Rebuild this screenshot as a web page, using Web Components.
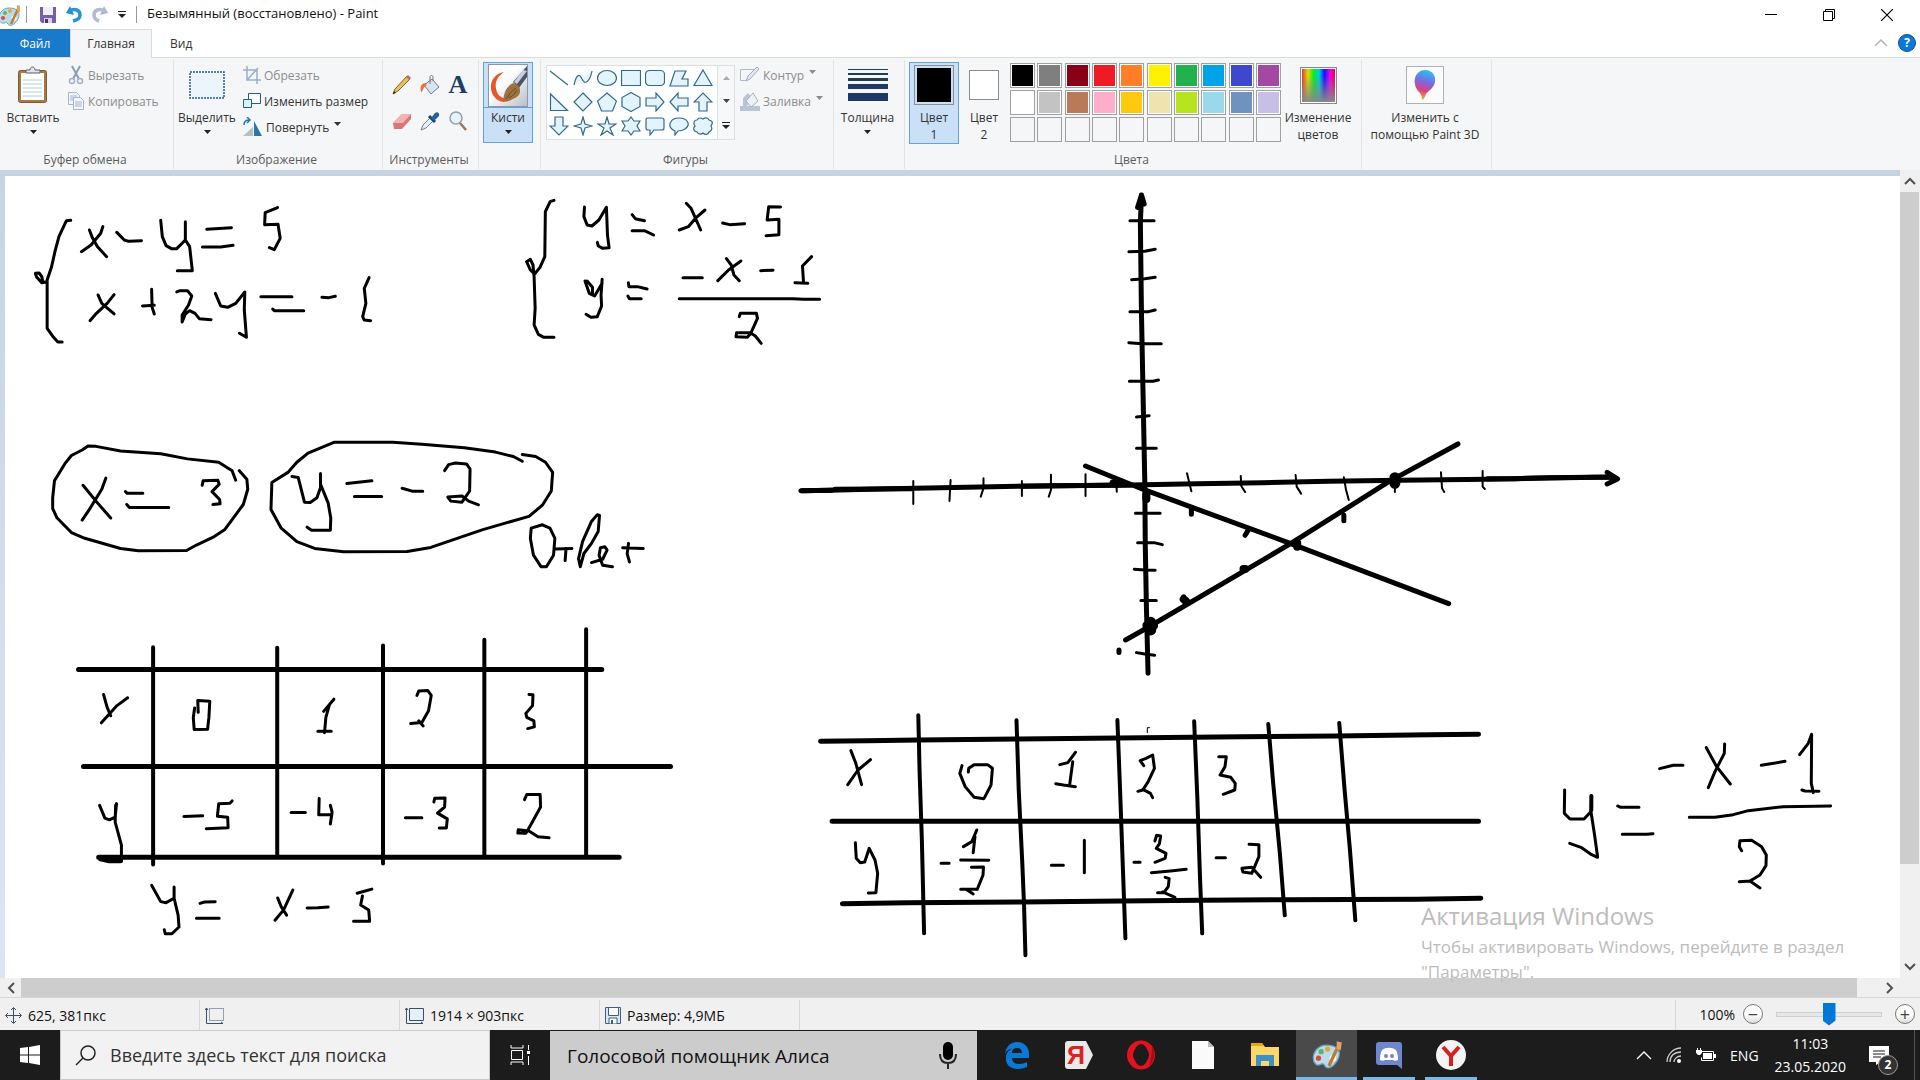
<!DOCTYPE html>
<html lang="ru">
<head>
<meta charset="utf-8">
<title>Безымянный (восстановлено) - Paint</title>
<style>
html, body {
    margin: 0;
    height: 100%;
}

body {
    font-family: "Open Sans", "Noto Sans", sans-serif;
    font-size: 12px;
    color: #333;
    background: #fff;
    overflow: hidden;
}
</style>
</head>
<body>
<paint-app></paint-app>

<script>
const base = `
*, *::before, *::after { box-sizing: border-box; }
button {
    font: inherit;
    color: inherit;
    background: none;
    border: 0;
    padding: 0;
    margin: 0;
}
svg { display: block; }
`

function define(name, css, html, setup) {
    customElements.define(name, class extends HTMLElement {
        constructor() {
            super();
            this.attachShadow({ mode: 'open' });
            const markup = typeof html == 'function' ? html(this) : html;
            this.shadowRoot.innerHTML = `<style>${base}${css}</style>${markup}`;
            if (setup) setup(this, this.shadowRoot);
        }
    })
}

// name: [width, height, svg body]
const palette = `
<path d="M11 4C5 4 1 9 1 14c0 4 3 6 5 5 2-1 3-1 4 1s4 2 7-1c4-4 5-9 3-12-2-2-5-3-9-3z" fill="#b9dcec" stroke="#6aa2bd"/>
<circle cx="5" cy="14" r="2" fill="#d94b3f"/><circle cx="7" cy="9" r="2" fill="#5bb562"/><circle cx="12" cy="7" r="2" fill="#e8a33b"/><circle cx="16" cy="14" r="2.500" fill="#fff"/>
<path d="M13 20 20 5" stroke="#c7772f" stroke-width="2.500"/><path d="m19 7 0-6 4 1-1 6z" fill="#e2a265"/>`
const icons = {
    paint: [22, 22, palette],
    paintBig: [30, 30, `<g transform="scale(1.300)">${palette}</g>`],
    save: [16, 16, `<path d="M0 0h16v16H2l-2-2z" fill="#7b5ea7"/><path d="M3 0h10v8H3z" fill="#eef0f8"/><path d="M4 11h8v5H4z" fill="#d9d3e6"/><path d="M5 12h3v4H5z" fill="#4c3676"/>`],
    undo: [16, 17, `<path d="M4 0 0 7l8 2z" fill="#1e8ed0"/><path d="M3 5c6-3 11-1 11 4 0 3-2 5-7 6" fill="none" stroke="#2794d3" stroke-width="3.500"/>`],
    redo: [16, 17, `<path d="m12 0 4 7-8 2z" fill="#a9b6cd"/><path d="M13 5C7 2 2 4 2 9c0 3 2 5 5 6" fill="none" stroke="#b0bcd0" stroke-width="3.500"/>`],
    more: [8, 7, `<path d="M0 .5h8" stroke="#222"/><path d="M0 3h8L4 7z" fill="#222"/>`],
    down: [7, 4, `<path d="M0 0h7L3.500 4z" fill="currentColor"/>`],
    up: [7, 4, `<path d="M0 4h7L3.500 0z" fill="currentColor"/>`],
    minimize: [12, 12, `<path d="M0 5.500h12" stroke="#000"/>`],
    restore: [12, 12, `<path d="M.5 2.500h9v9h-9zM2.500 2V.5h9v9H10" fill="none" stroke="#000"/>`],
    close: [12, 12, `<path d="m0 0 12 12M12 0 0 12" stroke="#000" stroke-width="1.200"/>`],
    fold: [14, 8, `<path d="m1 7 6-6 6 6" fill="none" stroke="#b5b5b5" stroke-width="1.500"/>`],
    paste: [32, 38, `<rect x="1.500" y="4.500" width="28" height="32" rx="2" fill="#a9793f" stroke="#7d5a31"/><path d="M4 7h23v27H4z" fill="#fff"/><path d="M6 14h19M6 18h19M6 22h19M6 26h19M6 30h19" stroke="#b6cde0"/><path d="M9 7V4h4c0-4 5-4 5 0h5v3z" fill="#e1e4e8" stroke="#59616b"/>`],
    cut: [18, 20, `<path d="m5 1 7 13M13 1 6 14" stroke="#8c9cb8" stroke-width="2"/><circle cx="5" cy="16" r="2.500" fill="none" stroke="#a2b1cc" stroke-width="1.500"/><circle cx="13" cy="16" r="2.500" fill="none" stroke="#a2b1cc" stroke-width="1.500"/>`],
    copy: [18, 20, `<path d="M1.500 1.500h8l3 3v9h-11z" fill="#f3f6fb" stroke="#a3b5cf"/><path d="M3 5h7M3 7h7M3 9h7" stroke="#a3b5cf"/><path d="M6.500 6.500h7l3 3v9h-10z" fill="#f3f6fb" stroke="#a3b5cf"/><path d="M8 11h7M8 13h7M8 15h7" stroke="#a3b5cf"/>`],
    select: [36, 28, `<rect x="1" y="1" width="34" height="26" fill="#edf5fc" stroke="#1f5c99" stroke-width="1.500" stroke-dasharray="2 1"/>`],
    crop: [18, 18, `<path d="M4 0v14h14M0 4h14v14M4 14 15 2" fill="none" stroke="#9dadc6" stroke-width="1.500"/>`],
    resize: [18, 16, `<path d="M5.500.5h12v10h-12z" fill="#fff" stroke="#1c5f91"/><path d="M.5 6.500h8v8h-8z" fill="#dff1fb" stroke="#1c5f91"/>`],
    rotate: [20, 20, `<path d="M0 19 10 10v9z" fill="#b9bfc6"/><path d="M11 4v15h8z" fill="#2979a8"/><path d="M1 8c0-3 2-5 5-5M4 0l3 3-3 3" fill="none" stroke="#2979a8" stroke-width="1.500"/>`],
    pencil: [20, 20, `<path d="m1 19 2-5L15 1l3 3L6 16z" fill="#e9c15d" stroke="#876126"/><path d="m14 2 2-2 3 3-2 2z" fill="#c66464"/><path d="m1 19 1-3 2 2z" fill="#333"/>`],
    bucket: [20, 20, `<path d="m4 10 8-6 7 8-8 7z" fill="#d8e5ef" stroke="#5f7f9a"/><path d="M10 9V2c0-2 3-2 3 0v4" fill="none" stroke="#777"/><path d="M7 8C1 8 0 11 1 17c2 0 2-5 5-6z" fill="#ec6f35"/>`],
    letter: [20, 20, `<text x="10" y="18" text-anchor="middle" font-family="Liberation Serif" font-weight="700" font-size="26" fill="#223c67">A</text>`],
    eraser: [20, 20, `<path d="m1 12 9-9 9 0 0 5-9 10H2z" fill="#d9767a"/><path d="m1 12 9-9h9l-8 9z" fill="#f4b3b1"/>`],
    picker: [20, 20, `<path d="m1 19 2-5 7-7 3 3-7 7z" fill="#e7f0f7" stroke="#738494"/><path d="m9 5 6 6" stroke="#174572" stroke-width="3"/><path d="m11 7 4-5c2-2 5 0 4 3l-5 5z" fill="#2463a0"/>`],
    zoom: [18, 20, `<circle cx="7" cy="7" r="6" fill="#e6f3fb" stroke="#8fa0ad" stroke-width="1.500"/><path d="m11 12 6 7" stroke="#a3714d" stroke-width="2.500"/>`],
    brush: [40, 43, `<defs><linearGradient id="b" x1="0" y1="0" x2="1" y2="1"><stop offset=".4" stop-color="#fff"/><stop offset="1" stop-color="#b9bdc6"/></linearGradient></defs><rect x=".5" y=".5" width="39" height="42" fill="url(#b)" stroke="#8c98a6"/><path d="M16 8C4 10 0 22 5 31c5 8 14 9 21 3-8 2-15 0-17-6-3-8-1-14 7-20z" fill="#e8562a"/><path d="M39 2 25 18l6 6 8-11z" fill="#4c5467"/><path d="m35 6-9 12 3 2 10-13z" fill="#c9ced8"/><path d="M15 38c1-6 1-12 7-17 3-3 7-2 9 2 2 3 1 7-1 9-4 4-9 3-15 6z" fill="#9b7340"/><path d="M18 35c3-4 5-8 10-11M21 34c4-2 6-5 8-8" stroke="#6d4a24" fill="none"/>`],
    thickness: [40, 32, `<path d="M0 .5h40" stroke="#1d3f57"/><path d="M0 5h40" stroke="#1d3f57" stroke-width="2"/><path d="M0 10.500h40" stroke="#1d3f57" stroke-width="3"/><path d="M0 17.500h40" stroke="#1e3963" stroke-width="5"/><path d="M0 28h40" stroke="#1e3963" stroke-width="8"/>`],
    outline: [20, 18, `<path d="M.5 3.500h14l-8 11h-6z" fill="none" stroke="#b3b8c2"/><path d="m6 15 2-5 9-9 2 2-9 10z" fill="#e5e8ee" stroke="#a1acbf"/>`],
    fill: [20, 20, `<path d="M0 15h20v5H0zM3 15V7l5-5 4 5-5 8z" fill="#b9c4d6"/><path d="m6 10 7-8 5 8-7 6z" fill="#eef1f6" stroke="#a4b1c6"/>`],
    colors: [37, 37, `<defs><linearGradient id="h"><stop offset="0" stop-color="#e33"/><stop offset=".18" stop-color="#dd0"/><stop offset=".36" stop-color="#0e2"/><stop offset=".52" stop-color="#0cd"/><stop offset=".68" stop-color="#11f"/><stop offset=".85" stop-color="#e0e"/><stop offset="1" stop-color="#e03"/></linearGradient><linearGradient id="v" x2="0" y2="1"><stop offset=".2" stop-color="#888" stop-opacity="0"/><stop offset="1" stop-color="#888"/></linearGradient></defs><rect x=".5" y=".5" width="36" height="36" fill="#fff" stroke="#888"/><path d="M2 2h33v33H2z" fill="url(#h)"/><path d="M2 2h33v33H2z" fill="url(#v)"/>`],
    paint3d: [38, 38, `<defs><linearGradient id="p" x1=".6" y1="0" x2=".4" y2="1"><stop offset="0" stop-color="#26c4ee"/><stop offset=".4" stop-color="#7d68e0"/><stop offset=".7" stop-color="#d8437d"/><stop offset="1" stop-color="#fbb42c"/></linearGradient></defs><rect x=".5" y=".5" width="37" height="37" fill="#fbfbfc" stroke="#b1b1b1"/><path d="M19 4c7 0 11 5 10 12-1 6-7 9-9 12-1 3-2 5-4 6 0-4-1-6-4-9C5 15 10 4 19 4z" fill="url(#p)"/>`],
    move: [17, 17, `<path d="M8.500 1v15M1 8.500h15M6 3l2.500-2.500L11 3M6 14l2.500 2.500L11 14M3 6 .5 8.500 3 11M14 6l2.500 2.500L14 11" fill="none" stroke="#384e66"/>`],
    selSize: [19, 17, `<path d="M4.500 1.500h14v12h-14z" fill="none" stroke="#39506a" stroke-dasharray="1 1"/><path d="M1.500 1v15.500H18M0 3l1.500-2L3 3M16 15l2 1.500" fill="none" stroke="#39506a"/>`],
    imgSize: [19, 17, `<path d="M4.500 1.500h14v12h-14z" fill="#e4f1fc" stroke="#39506a"/><path d="M1.500 1v15.500H18M0 3l1.500-2L3 3M16 15l2 1.500" fill="none" stroke="#39506a"/>`],
    disk: [16, 17, `<path d="M.5.5h15v16H.5z" fill="#d9e7f4" stroke="#3d5f84"/><path d="M3.500.5h10v8h-10z" fill="#fff" stroke="#3d5f84"/><path d="M4 11h8v6H4z" fill="#fff" stroke="#3d5f84"/><path d="M6 13h2v4H6z" fill="#3d5f84"/>`],
    windows: [20, 20, `<path d="m0 3 8-1v7.500H0zM9 2l11-2v9.500H9zM0 10.500h8V18l-8-1zM9 10.500h11V20L9 18z" fill="#fff"/>`],
    search: [21, 21, `<circle cx="13" cy="8" r="7" fill="none" stroke="#222" stroke-width="1.500"/><path d="m8 13-7 7" stroke="#222" stroke-width="1.500"/>`],
    taskview: [20, 20, `<path d="M1 0v3h12V0M1 20v-3h12v3M1.500 5.500h11v9h-11zM18.500 0v5M18.500 11v9" fill="none" stroke="#fff"/><path d="M17 6h3v3h-3z" fill="#fff"/>`],
    mic: [18, 28, `<rect x="4" width="10" height="18" rx="5" fill="#000"/><path d="M1 12c0 6 3 9 8 9s8-3 8-9M9 21v6" fill="none" stroke="#222" stroke-width="2"/>`],
    edge: [26, 27, `<path d="M1 12C2 4 7 0 13 0c8 0 12 6 12 12v4H8c0 4 3 6 7 6 3 0 6-1 8-2v5c-3 1-6 2-9 2-8 0-13-5-12-12 0-4 3-7 6-8-3 0-5 1-7 5zm7-1h10c0-3-2-5-5-5s-5 2-5 5z" fill="#0a78d6" fill-rule="evenodd"/>`],
    yandex: [28, 28, `<path d="M3 0h18l7 14-7 14H3q-3 0-3-3V3q0-3 3-3z" fill="#e9e9e9"/><text x="11" y="23" text-anchor="middle" font-family="Liberation Sans" font-weight="700" font-size="25" fill="#e02020">Я</text>`],
    opera: [30, 30, `<ellipse cx="15" cy="15" rx="11" ry="11.500" fill="none" stroke="#e2131f" stroke-width="6"/><ellipse cx="15" cy="15" rx="7" ry="11" fill="#1c1c1c"/><path d="M26 6c4 7 3 14-3 20 2-7 3-13 3-20z" fill="#a30d16"/>`],
    file: [22, 28, `<path d="M0 0h16l6 6v22H0z" fill="#fafafa"/><path d="M16 0v6h6z" fill="#bdbdbd"/>`],
    explorer: [28, 24, `<path d="M0 0h11l3 4h14v19H0z" fill="#fcd667"/><path d="M0 0h11l2 3H0z" fill="#e8a50d"/><path d="M5 23V12h18v11h-5v-5h-8v5z" fill="#3f8fc7"/>`],
    discord: [26, 27, `<path d="M3 0h20q3 0 3 3v24l-5-4H3q-3 0-3-3V3q0-3 3-3z" fill="#6f86d0"/><path d="M6 8c4-3 10-3 14 0 2 4 2 7 2 10-2 1-4 1-5 0H9c-1 1-3 1-5 0 0-3 0-6 2-10z" fill="#fff"/><circle cx="10" cy="14" r="2" fill="#6f86d0"/><circle cx="16" cy="14" r="2" fill="#6f86d0"/>`],
    ybrowser: [30, 30, `<circle cx="15" cy="15" r="15" fill="#f4f4f4"/><path d="m7 7 8 9v10M23 7l-8 9" fill="none" stroke="#d6201f" stroke-width="4"/>`],
    tray: [16, 9, `<path d="m1 8 7-7 7 7" fill="none" stroke="#fff" stroke-width="1.300"/>`],
    wifi: [16, 16, `<path d="M1 15C1 8 7 1 15 1M4 15c0-6 4-10 11-10M8 15c0-3 3-6 7-6" fill="none" stroke="#ccc" stroke-width="1.300"/><circle cx="13" cy="14" r="2" fill="#fff"/>`],
    battery: [20, 14, `<path d="M4.500 3.500h13v9h-12v-3" fill="none" stroke="#fff"/><path d="M7 5h9v6H7zM18 6h2v4h-2zM0 2h6v3L4 7H2L0 5zM1 0h1v2H1zM4 0h1v2H4z" fill="#fff"/>`],
    note: [20, 19, `<path d="M0 0h20v16h-8l-5 3v-3H0z" fill="#fff"/><path d="M4 5h12M4 8h12M4 11h8" stroke="#1c1c1c"/>`],
    arrowUp: [12, 8, `<path d="m1 7 5-5 5 5" fill="none" stroke="#505050" stroke-width="2"/>`],
    arrowDown: [12, 8, `<path d="m1 1 5 5 5-5" fill="none" stroke="#505050" stroke-width="2"/>`],
    arrowLeft: [8, 12, `<path d="M7 1 2 6l5 5" fill="none" stroke="#505050" stroke-width="2"/>`],
    arrowRight: [8, 12, `<path d="m1 1 5 5-5 5" fill="none" stroke="#505050" stroke-width="2"/>`]
}

define('ui-icon', `
:host { display: block; flex: none; }
`, el => {
    const [w, h, body] = icons[el.getAttribute('name')];
    return `<svg width="${w}" height="${h}" viewBox="0 0 ${w} ${h}" aria-hidden="true">${body}</svg>`
})

define('title-bar', `
:host { display: flex; align-items: center; height: 29px; padding-right: 4px; color: #111; background: #fff; }
.quick { display: flex; align-items: center; gap: 10px; margin-left: -2px; }
.line { width: 1px; height: 17px; background: #999; margin: 0 3px 0 0; }
.quick .line { margin: 0 3px 0 -4px; }
h1 { font-size: 13px; line-height: 17px; font-weight: 400; margin: 0 0 2px 7px; flex: 1; }
.win { display: flex; }
.win button { width: 58px; height: 28px; display: grid; place-items: center; }
`, `
<div class="quick">
    <ui-icon name="paint"></ui-icon>
    <span class="line"></span>
    <button aria-label="Сохранить"><ui-icon name="save"></ui-icon></button>
    <button aria-label="Отменить"><ui-icon name="undo"></ui-icon></button>
    <button aria-label="Вернуть"><ui-icon name="redo"></ui-icon></button>
    <button aria-label="Настройка"><ui-icon name="more"></ui-icon></button>
    <span></span>
</div>
<span class="line"></span>
<h1>Безымянный (восстановлено) - Paint</h1>
<div class="win">
    <button aria-label="Свернуть"><ui-icon name="minimize"></ui-icon></button>
    <button aria-label="Развернуть"><ui-icon name="restore"></ui-icon></button>
    <button aria-label="Закрыть"><ui-icon name="close"></ui-icon></button>
</div>
`)

define('tab-row', `
:host { display: flex; height: 29px; border-bottom: 1px solid #d9dcdd; background: #fff; }
button { height: 28px; padding: 0 18px; }
.file { width: 70px; background: #1979ca; color: #fff; padding: 0; }
.on { width: 82px; height: 29px; background: #f5f6f7; border: 1px solid #dadbdc; border-bottom: 0; padding: 0 0 1px; }
.space { flex: 1; }
.fold { padding: 0 10px; }
.help { width: 18px; height: 18px; border-radius: 50%; background: #0b78d7; border: 1px solid #0a5299; color: #fff; font-weight: 700; line-height: 16px; padding: 0; margin: 5px 4px 0 0; }
`, `
<button class="file">Файл</button>
<button class="on">Главная</button>
<button>Вид</button>
<span class="space"></span>
<button class="fold" aria-label="Свернуть ленту"><ui-icon name="fold"></ui-icon></button>
<button class="help">?</button>
`)

define('ribbon-group', `
:host { display: flex; flex-direction: column; flex: none; height: 109px; margin-top: 2px; padding-top: 2px; border-right: 1px solid #e2e3e4; }
.body { display: flex; flex: 1; align-items: flex-start; }
.label { height: 18px; line-height: 17px; text-align: center; color: #5c5c5c; padding-right: 3px; }
`, el => `<div class="body"><slot></slot></div><div class="label">${el.getAttribute('label') || ''}</div>`)

define('big-button', `
:host { display: block; width: 66px; }
button { width: 100%; min-height: 81px; display: flex; flex-direction: column; align-items: center; border: 1px solid transparent; line-height: 17px; text-align: center; white-space: nowrap; }
.icon { height: 44px; margin-bottom: 2px; display: grid; place-items: center; }
ui-icon { margin-top: 4px; color: #222; }
:host([active]) button { background: #c9e0f7; border-color: #62a2e4; }
:host([split]) .icon { height: 45px; margin-bottom: 1px; align-self: stretch; border-bottom: 1px solid #62a2e4; }
`, el => `
<button>
    <span class="icon"><slot name="icon"></slot></span>
    <span><slot></slot></span>
    ${el.hasAttribute('menu') ? '<ui-icon name="down"></ui-icon>' : ''}
</button>
`)

define('small-button', `
:host { display: block; }
button { height: 26px; display: flex; align-items: center; gap: 3px; padding-left: 3px; white-space: nowrap; }
button:disabled { color: #8d8d8d; }
.arrow { margin: -6px 0 0 2px; }
`, el => `
<button ${el.hasAttribute('off') ? 'disabled' : ''}>
    <ui-icon name="${el.getAttribute('icon')}"></ui-icon>
    <slot></slot>
    ${el.hasAttribute('menu') ? '<ui-icon class="arrow" name="down"></ui-icon>' : ''}
</button>
`)

define('tool-grid', `
:host { display: grid; grid-template-columns: repeat(3, 28px); grid-auto-rows: 36px; padding: 5px 0 0 5px; }
button { display: grid; place-items: center; }
`, ['pencil Карандаш', 'bucket Заливка', 'letter Текст', 'eraser Ластик', 'picker Палитра', 'zoom Масштаб'].map(t => {
    const [icon, label] = t.split(' ');
    return `<button aria-label="${label}"><ui-icon name="${icon}"></ui-icon></button>`
}).join(''))

const shapes = [
    '<path d="m1 3 18 14"/>',
    '<path d="M1 17C3 8 6 4 9 11s8 2 10-8"/>',
    '<ellipse cx="10" cy="10" rx="9.500" ry="7.500"/>',
    '<path d="M.5 2.500h19v15H.5z"/>',
    '<rect x=".5" y="2.500" width="19" height="15" rx="4"/>',
    '<path d="M6 3h11l-4 8h6v7H1z"/>',
    '<path d="m10 2 9 15.500H1z"/>',
    '<path d="M1.500 2v16.500h17z"/>',
    '<path d="m10 1 9 9-9 9-9-9z"/>',
    '<path d="m10 1 9.500 8-4 10h-11l-4-10z"/>',
    '<path d="m10 .5 9 5v9l-9 5-9-5v-9z"/>',
    '<path d="M1 6h10V1l8 9-8 9v-5H1z"/>',
    '<path d="M19 6H9V1l-8 9 8 9v-5h10z"/>',
    '<path d="M6 19V10H1l9-9 9 9h-5v9z"/>',
    '<path d="M6 1v9H1l9 9 9-9h-5V1z"/>',
    '<path d="m10 1 2 7 7 2-7 2-2 7-2-7-7-2 7-2z"/>',
    '<path d="m10 1 2 7h7l-6 4 3 7-6-4-6 4 3-7-6-4h7z"/>',
    '<path d="m10 1 3 4h6l-3 5 3 5h-6l-3 4-3-4H1l3-5-3-5h6z"/>',
    '<path d="M3 2h14q2 0 2 2v8q0 2-2 2H9l-4 5v-5H3q-2 0-2-2V4q0-2 2-2z"/>',
    '<path d="M6 19v-4C-3 11 1 2 10 2s12 7 6 11c-3 2-6 2-7 2z"/>',
    '<path d="M4 4c2-3 4-2 6-1 3-2 5-1 6 1 4 1 4 3 2 6 2 3 0 5-2 6-1 3-4 3-6 1-2 2-5 1-6-1-4-1-4-4-2-6C0 7 1 4 4 4z"/>'
]

define('shape-gallery', `
:host { display: flex; margin: 3px 0 0 5px; height: 75px; border: 1px solid #dcdfe3; background: #fdfefe; }
.list { display: grid; grid-template-columns: repeat(7, 24px); grid-auto-rows: 24px; width: 170px; }
.list button { display: grid; place-items: center; }
.list svg { fill: #e4f4fc; stroke: #35698c; stroke-width: 1.200; }
.bar { width: 17px; display: grid; border-left: 1px solid #dcdfe3; background: #f7f8fa; color: #444; }
.bar button { display: grid; place-items: center; }
.bar button:first-child { color: #aaa; }
`, `
<div class="list">${shapes.map((s, i) => `<button aria-label="Фигура ${i + 1}"><svg width="20" height="20" viewBox="0 0 20 20">${s}</svg></button>`).join('')}</div>
<div class="bar">
    <button aria-label="Вверх"><ui-icon name="up"></ui-icon></button>
    <button aria-label="Вниз"><ui-icon name="down"></ui-icon></button>
    <button aria-label="Все фигуры"><ui-icon name="more"></ui-icon></button>
</div>
`)

const swatches = `#000 #7f7f7f #880015 #ed1c24 #ff7f27 #fff200 #22b14c #00a2e8 #3f48cc #a349a4
#fff #c3c3c3 #b97a57 #ffaec9 #ffc90e #efe4b0 #b5e61d #99d9ea #7092be #c8bfe7`.split(/\s+/)

define('color-grid', `
:host { display: grid; grid-template-columns: repeat(10, 25px); grid-auto-rows: 25px; gap: 2px; justify-content: space-between; width: 271px; margin: 1px 0 0 1px; }
button { border: 1px solid #a0a0a0; padding: 1px; background: #fff; }
button:disabled { background: #f5f6f7; }
span { display: block; height: 100%; }
`, () => {
    let html = '';
    for (let i = 0; i < 30; i++) {
        const c = swatches[i];
        html += c ? `<button aria-label="${c}"><span style="background:${c}"></span></button>` : '<button disabled aria-label="Пусто"></button>';
    }
    return html
})

define('color-chip', `
:host { display: block; width: 30px; height: 30px; border: 1px solid #8c8c8c; background: #fff; }
:host([large]) { width: 40px; height: 40px; padding: 2px; background: #c9e0f7; }
i { display: block; height: 100%; }
`, el => `<i style="background:${el.getAttribute('color')}"></i>`)

define('ribbon-bar', `
:host { display: flex; height: 112px; background: #f5f6f7; }
.g1 { width: 174px; } .g2 { width: 209px; } .g3 { width: 96px; } .g4 { width: 62px; }
.g5 { width: 293px; } .g6 { width: 71px; } .g7 { width: 457px; } .g8 { width: 130px; }
.narrow { width: 50px; margin-left: 4px; }
.narrow + .narrow { margin-left: 0; }
.change { width: 74px; }
.thick { width: 67px; }
.p3d { width: 126px; }
.edit { margin-left: -2px; }
.shapes { margin-left: 2px; }
`, `
<ribbon-group class="g1" label="Буфер обмена">
    <big-button menu><ui-icon slot="icon" name="paste"></ui-icon>Вставить</big-button>
    <div class="edit">
        <small-button off icon="cut">Вырезать</small-button>
        <small-button off icon="copy">Копировать</small-button>
    </div>
</ribbon-group>
<ribbon-group class="g2" label="Изображение">
    <big-button menu><ui-icon slot="icon" name="select"></ui-icon>Выделить</big-button>
    <div>
        <small-button off icon="crop">Обрезать</small-button>
        <small-button icon="resize">Изменить размер</small-button>
        <small-button menu icon="rotate">Повернуть</small-button>
    </div>
</ribbon-group>
<ribbon-group class="g3" label="Инструменты"><tool-grid></tool-grid></ribbon-group>
<ribbon-group class="g4">
    <big-button class="narrow" active split menu><ui-icon slot="icon" name="brush"></ui-icon>Кисти</big-button>
</ribbon-group>
<ribbon-group class="g5" label="Фигуры">
    <shape-gallery></shape-gallery>
    <div class="shapes">
        <small-button off menu icon="outline">Контур</small-button>
        <small-button off menu icon="fill">Заливка</small-button>
    </div>
</ribbon-group>
<ribbon-group class="g6">
    <big-button class="thick" menu><ui-icon slot="icon" name="thickness"></ui-icon>Толщина</big-button>
</ribbon-group>
<ribbon-group class="g7" label="Цвета">
    <big-button class="narrow" active><color-chip slot="icon" large color="#000"></color-chip>Цвет<br>1</big-button>
    <big-button class="narrow"><color-chip slot="icon" color="#fff"></color-chip>Цвет<br>2</big-button>
    <color-grid></color-grid>
    <big-button class="change"><ui-icon slot="icon" name="colors"></ui-icon>Изменение<br>цветов</big-button>
</ribbon-group>
<ribbon-group class="g8">
    <big-button class="p3d"><ui-icon slot="icon" name="paint3d"></ui-icon>Изменить с<br>помощью Paint 3D</big-button>
</ribbon-group>
`)

// freehand strokes; each block has its own origin and scale
define('ink-sheet', `
:host { display: block; background: #fff; overflow: hidden; }
svg { fill: none; stroke: #000; stroke-width: 3px; stroke-linecap: round; stroke-linejoin: round; }
path { vector-effect: non-scaling-stroke; }
.w1 { stroke-width: 1px; } .w2 { stroke-width: 2px; } .w4 { stroke-width: 4px; } .w5 { stroke-width: 5px; }
.w8 { stroke-width: 8px; } .w11 { stroke-width: 11px; }
`, `
<svg width="1914" height="903" viewBox="0 0 1914 903" role="img" aria-label="Решение системы уравнений графическим способом">
<g transform="translate(-5 4) scale(.5357 .3333)">
    <path d="M132 121 124 122 110 170 103 212 96 262 88 300V445L100 472 108 486H116M88 305 78 308 68 290 66 280 73 279 78 290 80 306"/>
    <path d="M192 140 188 160 170 195 152 215M167 150 172 172 182 200 199 230M218 157 232 180 240 184 264 182"/>
    <path d="M300 121 303 170 310 197 320 206H330L346 180V125M346 180 354 200 359 272H331"/>
    <path d="M386 148 432 143M378 201H412L435 196M518 83 495 98 494 134 519 133 523 175 512 209 503 203"/>
    <path d="M213 344 200 370 180 400 168 422M183 345 190 370 213 402M266 378 288 376M283 328 284 382 288 402"/>
    <path d="M330 336 336 332H350L358 348 352 375 340 405V426L346 402 354 392 364 400 372 416 394 419"/>
    <path d="M402 340 412 378 425 382 440 370 457 336 456 390 458 430 460 472 447 460"/>
    <path d="M487 350H545M509 387 512 392H567M601 352 614 353 626 349M689 293 680 325 683 370 677 410 680 420 692 422"/>
    <path d="M1034 61 1027 65 1018 95 1017 230 1008 262 998 282 990 270 983 245 990 238 995 255 997 290 999 385 997 435 1005 463 1015 472H1034"/>
    <path d="M1091 81 1090 110 1096 135 1105 138 1118 120 1132 82 1134 165 1137 203 1125 205 1117 198 1115 187"/>
    <path d="M1180 104 1186 116 1203 122M1180 152H1203L1220 165M1281 70 1290 85 1308 150M1316 90 1300 112 1285 140 1268 150"/>
    <path d="M1349 129 1362 134 1390 131M1457 81 1435 80 1432 120 1454 118V164L1430 167"/>
    <path d="M1275 293H1311M1356 236 1365 255 1370 285 1380 302M1383 243 1360 270 1340 302M1420 272 1443 271M1515 230 1498 258 1500 308M1484 308 1508 310"/>
    <path d="M1268 356H1480L1500 358H1530"/>
    <path d="M1092 303 1100 340 1110 348 1124 310M1096 303 1106 322 1106 345M1124 298 1122 345 1123 378 1115 410 1103 412 1094 403"/>
    <path d="M1173 308 1174 320H1190L1208 327M1172 348 1175 356H1197"/>
    <path d="M1380 410 1382 400H1412L1414 415 1402 458H1375L1374 470 1395 472 1402 460 1410 468 1421 490"/>
</g>
<g transform="translate(-5 244) scale(.4464 .338)">
    <path d="M528 178 520 150 490 125 420 115 360 100 270 92 215 78 197 77 185 88 160 105 145 130 122 180 118 230V262L128 290 160 333 190 350 270 380 310 387 418 386 440 370 480 345 503 325 520 295 545 250 555 205 553 175 536 150"/>
    <path d="M186 193 215 240 248 290M237 172 228 205 200 265 184 296M281 212 285 217H320M284 250 290 259H378M453 193 455 180 488 178 491 190 475 212 492 235 493 248 477 250"/>
    <path d="M1170 122 1150 108 1110 95 1040 82 945 72 880 66H748L690 98 665 125 645 155 609 185 607 265 630 320 665 360 705 380 770 390 912 389 965 377 1080 325 1185 285 1215 252 1235 210 1238 155 1222 125 1200 108 1170 102"/>
    <path d="M654 167 668 170 682 243 695 244 710 230 718 200V158M718 190 735 245 741 290 740 326H698L688 317M777 188 833 180M794 226H855M901 202 925 211H947"/>
    <path d="M996 150 1005 132 1020 127 1045 130 1053 145 1052 210 1035 243 1010 240 1003 228 1035 225 1050 240 1072 251"/>
    <path d="M1215 310 1190 320 1188 350 1195 400 1212 434H1224L1240 400 1243 350 1232 320 1215 310M1245 382 1281 380M1268 380 1266 416"/>
    <path d="M1300 434 1296 410 1305 360 1325 300 1338 280 1343 282 1340 330 1325 365 1308 395 1300 434M1325 422 1350 412 1360 385 1355 375 1345 378 1342 400 1350 430 1372 434M1395 378 1441 380M1408 365 1405 395 1410 420"/>
    <path class="w5" d="M176 738H1348M187 1025H1502M221 1294H1387M225 1298 245 1304H270"/>
    <path class="w4" d="M343 672V1315M621 674V1290M858 667V1312M1085 650V1290M1313 619V1290"/>
    <path d="M232 812 240 850 248 875M286 822 262 845 245 870 227 896M444 865 443 830 470 832 468 880 465 915 435 916 433 880 436 852"/>
    <path d="M748 826 725 862M738 842 730 880 727 925M712 921H742M934 815 938 802 958 800 966 815 960 860 945 895 920 898M938 890 948 905"/>
    <path d="M1185 812 1194 813 1193 845 1178 868 1180 880 1196 890 1197 908 1182 913"/>
    <path d="M223 1140 235 1178 245 1183 258 1175 261 1135M259 1140 258 1190 272 1258V1303M412 1173 454 1171M520 1127 515 1134 490 1135 487 1172 510 1175 511 1206 462 1209"/>
    <path d="M652 1161H684M715 1120 714 1168H742M740 1140 744 1160 740 1195M908 1177H945M972 1130 974 1119 997 1118 996 1145 980 1163 1002 1180 1000 1207H984"/>
    <path d="M1175 1123 1180 1108H1210L1211 1145 1190 1195 1178 1223 1160 1222 1161 1212 1185 1216 1205 1233 1230 1236"/>
    <path d="M340 1377 360 1425 372 1428 390 1415V1382M390 1415 399 1465 401 1500 385 1520H370L368 1508M448 1430 458 1426 482 1425M440 1474H491"/>
    <path d="M622 1414 630 1440 642 1465M656 1391 635 1450 616 1480M688 1444 712 1443 735 1441M833 1388 800 1400M812 1408 808 1435 826 1450 828 1483H792"/>
</g>
<g transform="translate(775 4) scale(.5485 .3333)">
    <path class="w5" d="M659 45 657 130 659 400 662 650 665 900 666 1100 668 1280 671 1480M659 45 652 82M659 45 664 72"/>
    <path class="w5" d="M38 932 90 931 200 926 340 922 500 917 640 915 760 911 880 908 1000 904 1130 901 1290 898 1400 894 1520 891M1508 877 1527 897 1508 912"/>
    <path class="w5" d="M40 932 95 931M100 928 240 926M440 919 640 915M1290 896H1340L1400 893 1520 891"/>
    <path class="w5" d="M557 858 665 930 930 1090 1219 1271M630 1380 668 1345 930 1092 1110 905 1236 792"/>
    <path d="M638 122H682M636 215 665 214 684 208M641 299 665 296 684 292M638 395H672L684 390M636 488 660 491H695M637 604H680L690 600M650 711 673 707M650 805H686M648 1000H693M652 1088H682L697 1094M646 1168 665 1170 684 1171M658 1262H686M650 1418 665 1422 683 1426"/>
    <path class="w2" d="M243 903V972M311 900 309 963M371 895V925L366 950M441 903V948M494 884V930L490 950M557 883V948M613 905 614 935M742 880 750 934M840 888 841 918 848 936M940 885 942 920 950 941M1028 892 1032 930 1037 960M1121 900V936M1205 877 1207 925 1211 936M1281 873V920L1285 927"/>
    <path class="w11" d="M676 1327V1350M1121 893V910"/>
    <path class="w8" d="M608 910H622M668 945V957M943 1090V1100M736 1258 740 1263M845 1167H848M668 1337H682"/>
    <path class="w5" d="M750 985V1003M853 1052 848 1066M1028 1005V1022M618 1410V1418M736 1250V1260"/>
</g>
<g transform="translate(795 514) scale(.4464 .3333)">
    <path class="w5" d="M46 154 150 152 265 150 490 147 712 144 990 140 1200 138 1410 134 1520 133M72 394H1520M95 641 240 638 500 636 720 633 900 631 1090 629 1380 628 1525 625"/>
    <path class="w4" d="M265 76 268 250 273 450 278 730M485 91 490 300 498 520 502 650 505 796M711 90 717 300 724 560 729 745M883 94 890 320 896 560 901 730M1049 102 1060 280 1075 490 1086 676M1208 99 1220 300 1232 480 1244 691"/>
    <path class="w1" d="M778 128V113H783"/>
    <path d="M114 182 125 220 138 284M158 209 130 240 107 284M363 227 358 250 370 290 390 322 412 326 428 285 431 235 420 224H390L378 235 377 246"/>
    <path d="M617 187 600 218 582 224M611 215 604 285M573 281 590 285 617 290M770 227 762 212 775 205 790 195 794 235 780 275 768 300 757 304M768 298 785 310 790 323"/>
    <path d="M938 200H955L952 230 941 255 965 262 975 280 974 300 948 313"/>
    <path d="M124 458 126 505 135 518 145 516 155 475 168 510 174 550 170 608 153 609M316 520H334M396 420 385 455 366 470M392 440 388 488M360 510 423 511M384 532 411 531 410 555 397 598H360M372 598 388 612"/>
    <path d="M563 526H590M637 451V548M748 517H762M795 453 799 436 808 438 805 462 798 475 820 490 818 505 795 517M787 548 830 543 865 538M818 562 827 566 825 590 815 608H801M812 606 840 622"/>
    <path d="M932 503H953M1006 463 1028 464V500L1012 550 992 546 990 535 1012 532 1032 562"/>
</g>
<g transform="translate(1395 524) scale(.3333)">
    <path d="M494 270 493 340 510 357H552L573 335 575 288M573 335 583 400 593 472 575 464 545 443 509 430M653 318 662 322H717M667 403H740L759 401"/>
    <path class="w4" d="M574 288V330"/>
    <path d="M779 206 820 196H849M919 143 950 200 991 252M974 132 973 160 945 215 925 263M1084 196 1155 184M1199 164 1225 130 1235 103 1234 250 1240 278M1206 270 1215 273 1257 274"/>
    <path d="M868 352H945L1000 344 1045 332 1150 320 1292 318M1025 452 1018 440 1020 422 1055 421 1085 440 1099 465 1098 497 1080 525 1050 543 1018 545M1050 543 1080 564"/>
</g>
</svg>
`)

define('scroll-bar', `
:host { display: flex; background: #f0f0f0; }
:host([side]) { flex-direction: column; width: 20px; padding-right: 1px; }
:host(:not([side])) { height: 19px; }
button { display: grid; place-items: center; flex: none; width: 21px; height: 19px; }
:host([side]) button { width: 19px; height: 22px; }
.thumb { background: #cdcdcd; flex: 982; }
.rest { flex: 12; }
:host([side]) .thumb { flex: 88; }
`, el => {
    const [a, b] = el.hasAttribute('side') ? ['arrowUp', 'arrowDown'] : ['arrowLeft', 'arrowRight'];
    return `
<button aria-label="Назад"><ui-icon name="${a}"></ui-icon></button>
<span class="thumb"></span><span class="rest"></span>
<button aria-label="Вперёд"><ui-icon name="${b}"></ui-icon></button>`
})

define('work-area', `
:host { position: relative; display: grid; grid-template-columns: minmax(0, 1fr) 20px; grid-template-rows: minmax(0, 1fr) 19px; flex: 1; min-height: 0; }
.desk { padding: 6px 0 0 5px; background: linear-gradient(#c8d3e2, #dce6f2); overflow: hidden; display: grid; }
.corner { background: #f0f0f0; }
.mark { position: absolute; right: 69px; bottom: 13px; width: 430px; color: #bcbcbc; font-size: 17px; line-height: 25px; pointer-events: none; }
.mark b { display: block; font-weight: 400; font-size: 24px; line-height: 36px; }
`, `
<div class="desk"><ink-sheet></ink-sheet></div>
<scroll-bar side></scroll-bar>
<scroll-bar></scroll-bar>
<span class="corner"></span>
<div class="mark"><b>Активация Windows</b>Чтобы активировать Windows, перейдите в раздел "Параметры".</div>
`)

define('status-bar', `
:host { display: flex; height: 33px; background: #f0f0f0; border-top: 1px solid #d7d7d7; color: #111; font-size: 14px; }
.cell { display: flex; align-items: center; gap: 6px; width: 200px; padding-left: 3px; margin-top: 2px; border-right: 1px solid #d7d7d7; white-space: nowrap; }
.cell:nth-child(n + 2) { padding-left: 5px; }
.space { flex: 1; border-right: 1px solid #d7d7d7; margin-top: 2px; }
.zoom { display: flex; align-items: center; padding: 0 5px 0 23px; }
.zoom button { width: 20px; height: 20px; border: 1px solid #777; border-radius: 50%; background: linear-gradient(#fff 50%, #dcdcdc); line-height: 16px; font-size: 18px; color: #444; }
label { margin-right: 8px; }
input { appearance: none; width: 106px; height: 24px; margin: 0 13px; background: none; }
input::-webkit-slider-runnable-track { height: 5px; background: #e7e7e7; border: 1px solid #cfcfcf; }
input::-webkit-slider-thumb { appearance: none; width: 13px; height: 23px; margin-top: -10px; background: #0078d7; clip-path: polygon(0 0, 100% 0, 100% 78%, 50% 100%, 0 78%); }
`, `
<span class="cell"><ui-icon name="move"></ui-icon>625, 381пкс</span>
<span class="cell"><ui-icon name="selSize"></ui-icon></span>
<span class="cell"><ui-icon name="imgSize"></ui-icon>1914 × 903пкс</span>
<span class="cell"><ui-icon name="disk"></ui-icon>Размер: 4,9МБ</span>
<span class="space"></span>
<div class="zoom">
    <label for="zoom">100%</label>
    <button aria-label="Уменьшить">−</button>
    <input id="zoom" type="range" min="0" max="100" value="50">
    <button aria-label="Увеличить">+</button>
</div>
`)

define('task-button', `
:host { display: block; width: 62px; height: 50px; }
button { width: 100%; height: 100%; display: grid; place-items: center; }
:host([running]) button { box-shadow: inset 0 -3px #76b9ed; width: 52px; margin: 0 5px; }
:host([current]) button { background: #4a4a4a; width: 61px; margin: 0; }
`, el => `<button aria-label="${el.getAttribute('label')}"><ui-icon name="${el.getAttribute('icon')}"></ui-icon></button>`)

define('task-bar', `
:host { display: flex; height: 50px; background: #1c1c1c; color: #fff; }
.sq { width: 60px; display: grid; place-items: center; }
.search { width: 430px; display: flex; align-items: center; gap: 14px; background: #f2f2f2; border: 1px solid #c8c8c8; padding-left: 14px; color: #222; }
input { flex: 1; min-width: 0; border: 0; outline: 0; padding: 0; background: none; font: inherit; font-size: 18px; }
input::placeholder { color: #333; opacity: 1; }
.alisa { width: 427px; margin-top: 1px; background: #ccc; color: #111; font-size: 19px; display: flex; justify-content: space-between; align-items: center; padding: 0 20px 0 17px; }
.apps { display: flex; margin-left: 9px; }
.tray { display: flex; align-items: center; gap: 14px; margin-left: auto; font-size: 14px; }
time { line-height: 23px; text-align: center; margin: 0 9px 0 2px; }
.note { position: relative; margin-right: 11px; }
.badge { position: absolute; left: 9px; top: 9px; width: 20px; height: 20px; border-radius: 50%; background: #333; border: 1px solid #999; font-size: 12px; font-weight: 700; line-height: 18px; }
.peek { width: 6px; height: 50px; border-left: 1px solid #555; }
`, `
<button class="sq" aria-label="Пуск"><ui-icon name="windows"></ui-icon></button>
<label class="search"><ui-icon name="search"></ui-icon><input type="text" placeholder="Введите здесь текст для поиска"></label>
<button class="sq" aria-label="Представление задач"><ui-icon name="taskview"></ui-icon></button>
<button class="alisa">Голосовой помощник Алиса<ui-icon name="mic"></ui-icon></button>
<div class="apps">
    <task-button icon="edge" label="Edge"></task-button>
    <task-button icon="yandex" label="Яндекс"></task-button>
    <task-button icon="opera" label="Opera"></task-button>
    <task-button icon="file" label="Файл"></task-button>
    <task-button icon="explorer" label="Проводник"></task-button>
    <task-button icon="paintBig" label="Paint" running current></task-button>
    <task-button icon="discord" label="Discord" running></task-button>
    <task-button icon="ybrowser" label="Яндекс.Браузер" running></task-button>
</div>
<div class="tray">
    <ui-icon name="tray"></ui-icon>
    <ui-icon name="wifi"></ui-icon>
    <ui-icon name="battery"></ui-icon>
    <span>ENG</span>
    <time>11:03<br>23.05.2020</time>
    <button class="note" aria-label="Уведомления"><ui-icon name="note"></ui-icon><span class="badge">2</span></button>
    <span class="peek"></span>
</div>
`)

define('paint-app', `
:host { display: flex; flex-direction: column; height: 100vh; }
title-bar, tab-row, ribbon-bar, status-bar, task-bar { flex: none; }
`, `
<title-bar></title-bar>
<tab-row></tab-row>
<ribbon-bar></ribbon-bar>
<work-area></work-area>
<status-bar></status-bar>
<task-bar></task-bar>
`)
</script>
</body>
</html>
